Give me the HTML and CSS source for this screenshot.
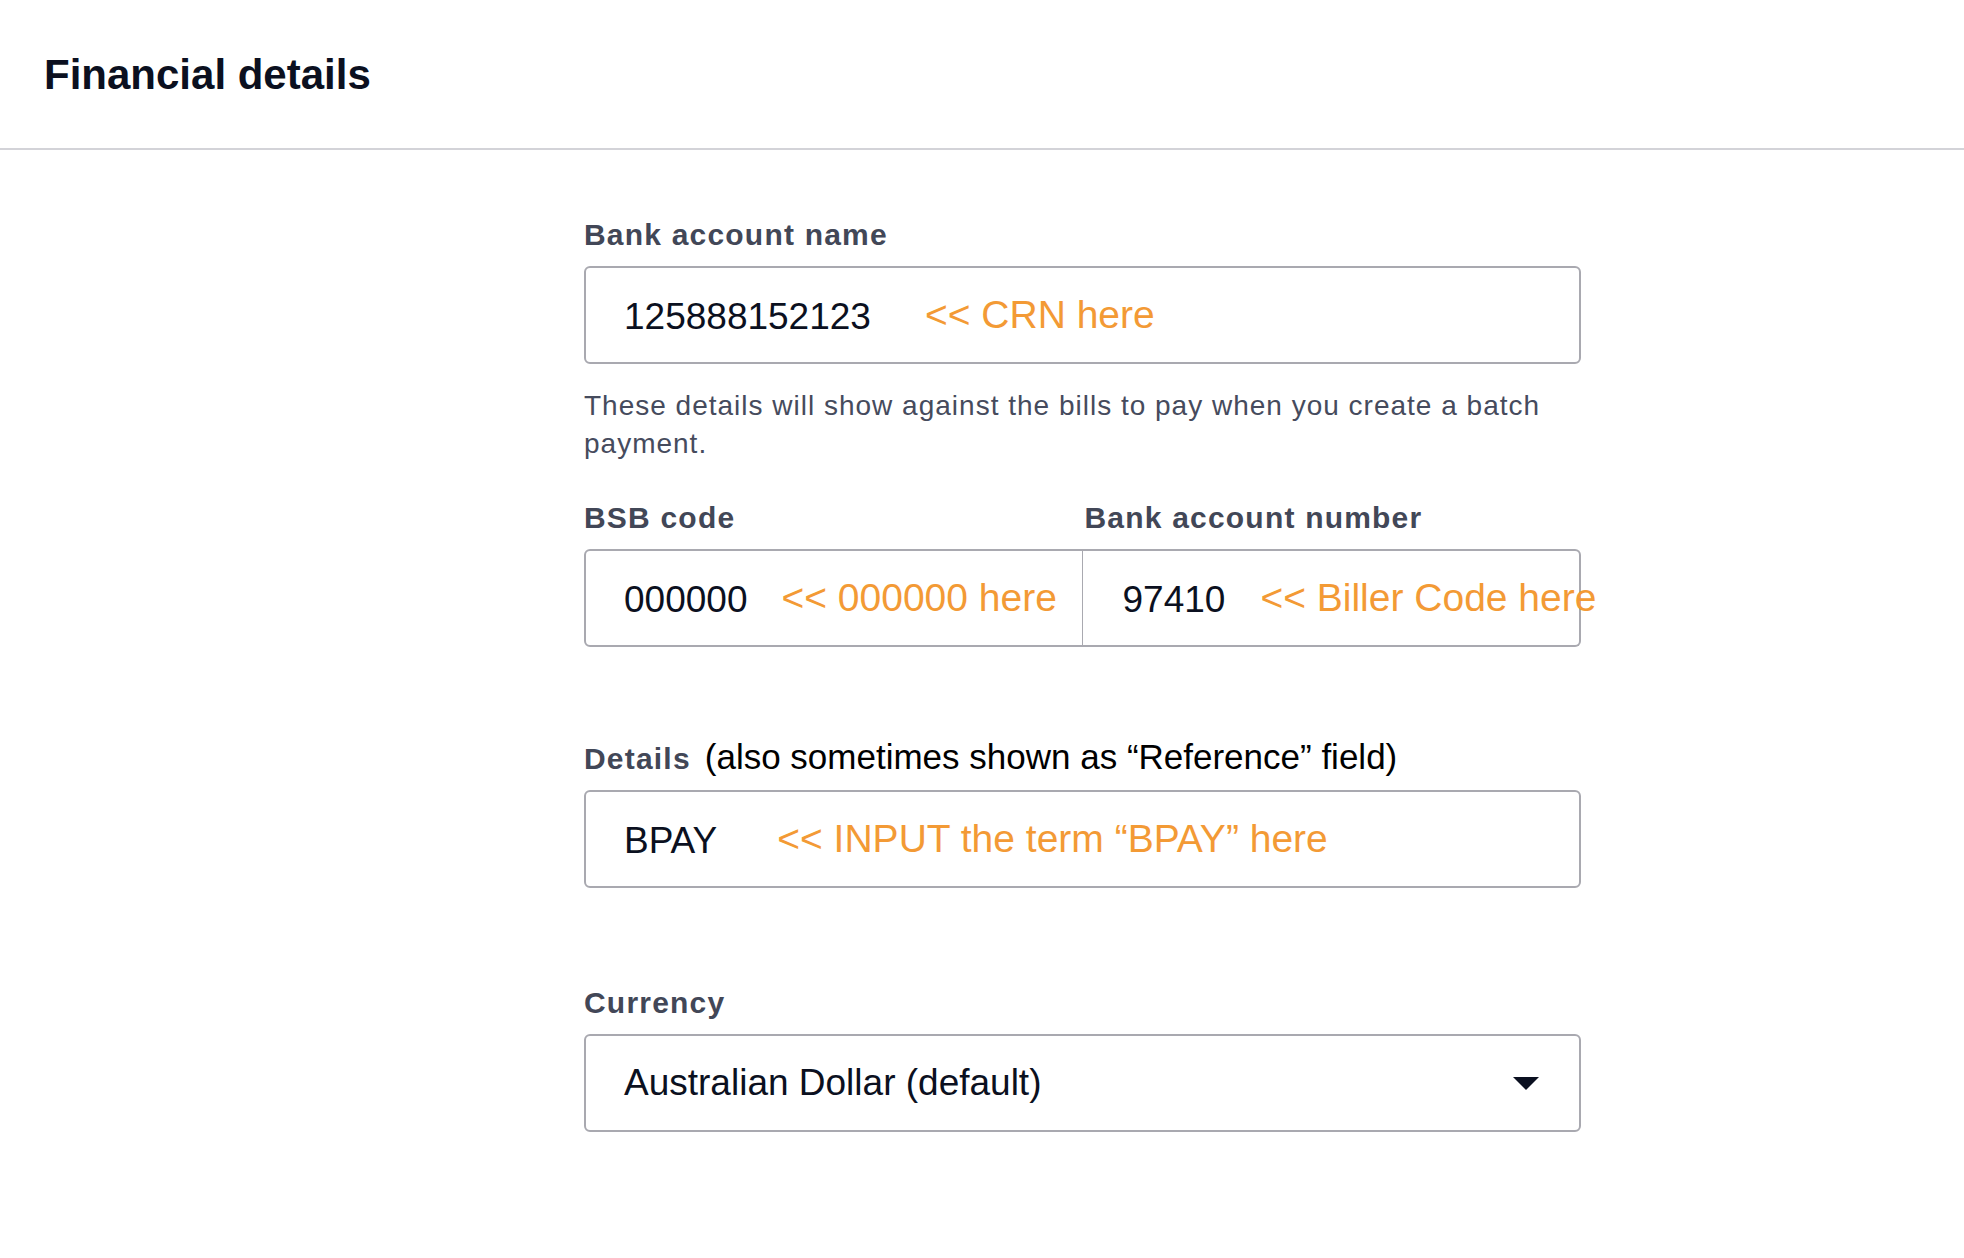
FILE: index.html
```html
<!DOCTYPE html>
<html lang="en">
<head>
<meta charset="utf-8">
<title>Financial details</title>
<link rel="stylesheet" href="styles.css">
</head>
<body>
<header class="page-header">
  <h1 class="page-title">Financial details</h1>
</header>
<main class="form">
  <section class="field">
    <div class="field-label">Bank account name</div>
    <div class="input">
      <span class="line"><span class="value">125888152123</span><span class="note note-crn">&lt;&lt; CRN here</span></span>
    </div>
    <p class="hint">These details will show against the bills to pay when you create a batch payment.</p>
  </section>

  <section class="split">
    <div class="split-col">
      <div class="field-label">BSB code</div>
      <div class="input input-left">
        <span class="line"><span class="value">000000</span><span class="note note-bsb">&lt;&lt; 000000 here</span></span>
      </div>
    </div>
    <div class="split-col">
      <div class="field-label label-right">Bank account number</div>
      <div class="input input-right">
        <span class="line"><span class="value">97410</span><span class="note note-biller">&lt;&lt; Biller Code here</span></span>
      </div>
    </div>
  </section>

  <section class="field field-details">
    <div class="field-label">Details<span class="label-aside">(also sometimes shown as “Reference” field)</span></div>
    <div class="input">
      <span class="line"><span class="value">BPAY</span><span class="note note-bpay">&lt;&lt; INPUT the term “BPAY” here</span></span>
    </div>
  </section>

  <section class="field field-currency">
    <div class="field-label">Currency</div>
    <div class="input select">
      <span class="line"><span class="value">Australian Dollar (default)</span></span>
      <svg class="caret" width="26" height="13" viewBox="0 0 26 13" aria-hidden="true"><polygon points="0,0 26,0 13,13" fill="#0b1020"/></svg>
    </div>
  </section>
</main>
</body>
</html>
```

FILE: styles.css
```css
html, body {
  margin: 0;
  padding: 0;
  background: #ffffff;
}

body {
  font-family: "Liberation Sans", Arial, Helvetica, sans-serif;
  color: #0b1020;
}

.page-header {
  padding: 50px 0 48px 44px;
  border-bottom: 2px solid #d3d3d8;
}

.page-title {
  margin: 0;
  font-size: 42px;
  line-height: 50px;
  font-weight: 700;
  color: #0b1020;
}

.form {
  margin-left: 584px;
  width: 997px;
  padding-top: 67px;
}

.field-label {
  display: block;
  font-size: 30px;
  line-height: 36px;
  font-weight: 700;
  color: #424757;
  letter-spacing: 1.2px;
  margin-bottom: 13px;
  white-space: nowrap;
}

.label-right {
  padding-left: 2px;
}

.label-aside {
  font-size: 35px;
  line-height: 30px;
  font-weight: 400;
  color: #000000;
  letter-spacing: 0;
  margin-left: 14px;
}

.input {
  box-sizing: border-box;
  height: 98px;
  border: 2px solid #a9a9b0;
  border-radius: 6px;
  display: flex;
  align-items: center;
  padding-left: 38px;
  background: #ffffff;
  min-width: 0;
}

.line {
  white-space: nowrap;
}

.value {
  font-size: 37px;
  color: #0b1020;
}

.note {
  font-size: 39px;
  color: #f39a35;
  vertical-align: 1px;
}

.note-crn { margin-left: 54px; }
.note-bsb { margin-left: 34px; }
.note-biller { margin-left: 35px; }
.note-bpay { margin-left: 60px; }

.hint {
  margin: 23px 0 0;
  font-size: 28px;
  line-height: 38px;
  color: #464b5d;
  letter-spacing: 1px;
}

.split {
  margin-top: 37px;
  display: grid;
  grid-template-columns: minmax(0, 1fr) minmax(0, 1fr);
}

.split-col {
  min-width: 0;
}

.input-left {
  border-right-width: 1px;
  border-top-right-radius: 0;
  border-bottom-right-radius: 0;
}

.input-right {
  border-left: 0;
  border-top-left-radius: 0;
  border-bottom-left-radius: 0;
  padding-left: 40px;
}

.field-details {
  margin-top: 94px;
}

.field-currency {
  margin-top: 97px;
}

.select {
  justify-content: space-between;
  padding-right: 40px;
}

.caret {
  display: block;
  flex: none;
}
```
